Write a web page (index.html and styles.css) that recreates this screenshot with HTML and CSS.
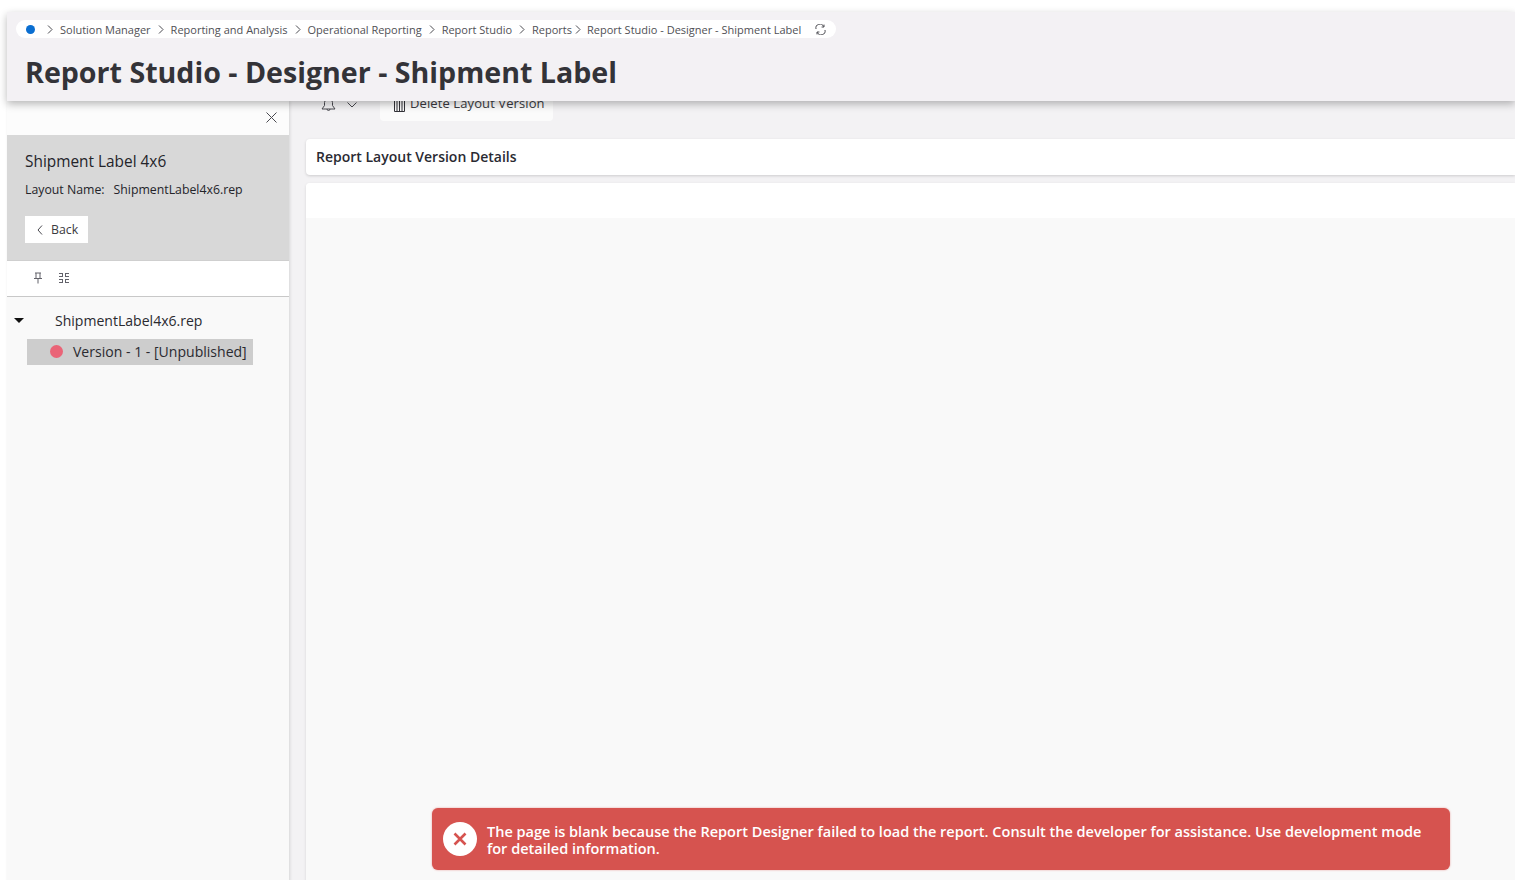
FILE: index.html
```html
<!DOCTYPE html>
<html lang="en">
  <head>
    <meta charset="UTF-8" />
    <meta name="viewport" content="width=device-width, initial-scale=1.0" />
    <title>Report Studio - Designer - Shipment Label</title>
    <link rel="stylesheet" href="styles.css">
  </head>
  <body>
    <div class="page">
      <header class="page-header">
        <nav class="breadcrumb">
          <span class="home-dot"></span>
          <svg class="crumb-sep first" width="6" height="9" viewBox="0 0 6 9"><path d="M1 .5 5 4.5 1 8.5" /></svg>
          <span class="crumb">Solution Manager</span>
          <svg class="crumb-sep" width="6" height="9" viewBox="0 0 6 9"><path d="M1 .5 5 4.5 1 8.5" /></svg>
          <span class="crumb">Reporting and Analysis</span>
          <svg class="crumb-sep" width="6" height="9" viewBox="0 0 6 9"><path d="M1 .5 5 4.5 1 8.5" /></svg>
          <span class="crumb">Operational Reporting</span>
          <svg class="crumb-sep" width="6" height="9" viewBox="0 0 6 9"><path d="M1 .5 5 4.5 1 8.5" /></svg>
          <span class="crumb">Report Studio</span>
          <svg class="crumb-sep" width="6" height="9" viewBox="0 0 6 9"><path d="M1 .5 5 4.5 1 8.5" /></svg>
          <span class="crumb">Reports</span>
          <svg class="crumb-sep tight" width="6" height="9" viewBox="0 0 6 9"><path d="M1 .5 5 4.5 1 8.5" /></svg>
          <span class="crumb">Report Studio - Designer - Shipment Label</span>
          <svg class="refresh" width="11" height="11" viewBox="0 0 11 11">
            <path d="M1 5A4 4 0 0 1 8.6 2.6M10 6A4 4 0 0 1 2.4 8.4" />
            <path d="M9 .6V3H6.6M2 10.4V8H4.4" />
          </svg>
        </nav>
        <h1 class="page-title">Report Studio - Designer - Shipment Label</h1>
      </header>

      <div class="workspace">
        <aside class="sidebar">
          <div class="close-row">
            <svg width="11" height="11" viewBox="0 0 11 11"><path d="M.5.5 10.5 10.5M10.5.5 .5 10.5" /></svg>
          </div>
          <div class="summary">
            <div class="summary-title">Shipment Label 4x6</div>
            <div class="summary-line"><span>Layout Name:</span><span>ShipmentLabel4x6.rep</span></div>
            <button class="back-btn">
              <svg width="6" height="10" viewBox="0 0 6 10"><path d="M5 .5 1 5 5 9.5" /></svg>
              Back
            </button>
          </div>
          <div class="tree-tools">
            <svg width="10" height="12" viewBox="0 0 10 12"><path d="M2 1H8M3 1V6M7 1V6M1 6.500H9M5 6.500V11.500" /></svg>
            <svg width="12" height="12" viewBox="0 0 12 12"><path d="M4.500 1V5M7.500 1V5M4.500 7V11M7.500 7V11M1 1.500H4.500M7.500 1.500H11M1 4.500H4.500M7.500 4.500H11M1 7.500H4.500M7.500 7.500H11M1 10.500H4.500M7.500 10.500H11" /></svg>
          </div>
          <div class="tree">
            <div class="tree-root"><span class="caret"></span><span>ShipmentLabel4x6.rep</span></div>
            <div class="tree-item"><span class="status-dot"></span><span>Version - 1 - [Unpublished]</span></div>
          </div>
        </aside>

        <main class="content">
          <div class="toolbar">
            <div class="bell-menu">
              <svg width="15" height="15" viewBox="0 0 15 15"><path d="M1 12H14L11.500 8.500V5.500A4 4 0 0 0 3.500 5.500V8.500ZM6 12A1.500 1.500 0 0 0 9 12" /></svg>
              <svg width="10" height="6" viewBox="0 0 10 6"><path d="M.5.5 5 5 9.500.5" /></svg>
            </div>
            <button class="delete-btn">
              <svg width="13" height="15" viewBox="0 0 13 15"><path d="M.5 1H12.500M1.500 1V14.500H11.500V1M4 3V14.500M6.500 3V14.500M9 3V14.500" /></svg>
              Delete Layout Version
            </button>
          </div>
          <div class="details-card">Report Layout Version Details</div>
          <div class="report-card">
            <div class="report-card-top"></div>
          </div>
        </main>
      </div>

      <div class="error-toast">
        <span class="error-icon">
          <svg width="14" height="14" viewBox="0 0 14 14"><path d="M1.500 1.500 12.500 12.500M12.500 1.500 1.500 12.500" /></svg>
        </span>
        <p>The page is blank because the Report Designer failed to load the report. Consult the developer for assistance. Use development mode for detailed information.</p>
      </div>
    </div>
  </body>
</html>
```

FILE: styles.css
```css
* {
  box-sizing: border-box;
}
html,
body {
  height: 100%;
}
body {
  margin: 0;
  background: #ffffff;
  font-family: "Open Sans", "Noto Sans", sans-serif;
  color: #32323a;
  overflow: hidden;
}
svg {
  fill: none;
  stroke: #4a4a50;
  stroke-width: 1;
  flex: none;
}
.page {
  position: relative;
  height: 880px;
  margin-top: 12px;
  margin-left: 7px;
  background: #f3f2f4;
  display: flex;
  flex-direction: column;
}
.page-header {
  position: relative;
  z-index: 2;
  height: 89px;
  flex: none;
  padding: 8px 0 0 9px;
  background: #f3f1f4;
  box-shadow: 0 3px 8px rgba(0, 0, 0, 0.28);
}
.breadcrumb {
  display: flex;
  align-items: center;
  height: 18px;
  width: 820px;
  padding: 0 10px;
  background: #ffffff;
  border-radius: 9px;
  font-size: 11px;
  color: #505055;
  white-space: nowrap;
}
.home-dot {
  width: 9px;
  height: 9px;
  border-radius: 50%;
  background: #0a6ed1;
  flex: none;
}
.crumb-sep {
  margin: 0 7px 0 7px;
}
.crumb-sep.first {
  margin: 0 7px 0 12px;
}
.crumb-sep.tight {
  margin: 0 6px 0 3px;
}
.refresh {
  margin-left: 14px;
}
.page-title {
  margin: 13px 0 0 9px;
  font-size: 28.6px;
  line-height: 41px;
  font-weight: 700;
  color: #333338;
}
.workspace {
  flex: 1;
  min-height: 0;
  display: grid;
  grid-template-columns: 282px 1fr;
}
.sidebar {
  background: #f9f9f9;
  box-shadow: 1px 0 3px rgba(0, 0, 0, 0.12);
  display: flex;
  flex-direction: column;
}
.close-row {
  height: 34px;
  display: flex;
  justify-content: flex-end;
  align-items: center;
  padding: 0 12px 2px 0;
  background: #fcfcfc;
}
.summary {
  height: 126px;
  padding: 16px 18px 0;
  background: #d8d8d8;
  border-bottom: 1px solid #cfcfcf;
  color: #24242a;
}
.summary-title {
  font-size: 15.4px;
  line-height: 21px;
}
.summary-line {
  display: flex;
  gap: 9px;
  margin-top: 9px;
  font-size: 12.3px;
  line-height: 17px;
}
.back-btn {
  display: flex;
  align-items: center;
  gap: 8px;
  margin-top: 18px;
  width: 63px;
  height: 27px;
  padding: 0 0 0 12px;
  border: none;
  background: #ffffff;
  font: inherit;
  font-size: 12.3px;
  color: #3a3a40;
}
.tree-tools {
  height: 36px;
  display: flex;
  align-items: center;
  gap: 15px;
  padding: 0 0 2px 26px;
  background: #ffffff;
  border-bottom: 1px solid #c8c8c8;
}
.tree-tools svg {
  stroke: #62626a;
}
.tree {
  padding-top: 11px;
  font-size: 14.05px;
  color: #2a2a30;
}
.tree-root {
  display: flex;
  align-items: center;
  height: 24px;
  padding-left: 7px;
}
.caret {
  width: 0;
  height: 0;
  margin-right: 31px;
  border-left: 5px solid transparent;
  border-right: 5px solid transparent;
  border-top: 5px solid #111111;
}
.tree-item {
  display: flex;
  align-items: center;
  gap: 10px;
  width: 226px;
  height: 26px;
  margin: 7px 0 0 20px;
  padding: 0 0 2px 23px;
  background: #cdcdcd;
  white-space: nowrap;
}
.status-dot {
  width: 13px;
  height: 13px;
  border-radius: 50%;
  background: #ea6477;
  flex: none;
}
.content {
  padding: 0 0 0 17px;
  min-width: 0;
  display: flex;
  flex-direction: column;
}
.toolbar {
  display: flex;
  align-items: flex-start;
  height: 35px;
  margin-top: -15px;
  flex: none;
}
.bell-menu {
  display: flex;
  align-items: center;
  gap: 11px;
  width: 74px;
  height: 35px;
  padding: 2px 0 0 15px;
}
.delete-btn {
  display: flex;
  align-items: flex-start;
  gap: 4px;
  width: 173px;
  height: 35px;
  padding: 8px 0 0 13px;
  border: none;
  border-radius: 0 0 4px 4px;
  background: #fbfbfb;
  font: inherit;
  font-size: 13px;
  line-height: 18px;
  letter-spacing: 0.1px;
  color: #3a3a40;
  white-space: nowrap;
}
.delete-btn svg {
  margin-top: 3px;
  stroke: #333338;
}
.details-card {
  flex: none;
  height: 36px;
  margin-top: 18px;
  padding-left: 10px;
  background: #ffffff;
  border-radius: 4px 0 0 4px;
  box-shadow: 0 1px 3px rgba(0, 0, 0, 0.16);
  font-size: 14px;
  font-weight: 600;
  line-height: 36px;
  color: #2a2a32;
}
.report-card {
  flex: 1;
  margin-top: 8px;
  background: #f9f9f9;
  border-radius: 4px 0 0 0;
  box-shadow: 0 1px 3px rgba(0, 0, 0, 0.12);
}
.report-card-top {
  height: 35px;
  background: #ffffff;
  border-radius: 4px 0 0 0;
}
.error-toast {
  position: absolute;
  left: 425px;
  top: 796px;
  width: 1018px;
  height: 61.500px;
  display: flex;
  align-items: center;
  gap: 10px;
  padding: 0 24px 0 11px;
  background: #d6534f;
  border-radius: 6px;
  box-shadow: 0 0 2px rgba(217, 83, 79, 0.6);
  color: #ffffff;
}
.error-toast p {
  margin: 0;
  padding-top: 2px;
  font-size: 14.53px;
  font-weight: 600;
  line-height: 17px;
}
.error-icon {
  width: 34px;
  height: 34px;
  border-radius: 50%;
  background: #ffffff;
  display: flex;
  align-items: center;
  justify-content: center;
  flex: none;
}
.error-icon svg {
  stroke: #d6534f;
  stroke-width: 2.6;
}
```
